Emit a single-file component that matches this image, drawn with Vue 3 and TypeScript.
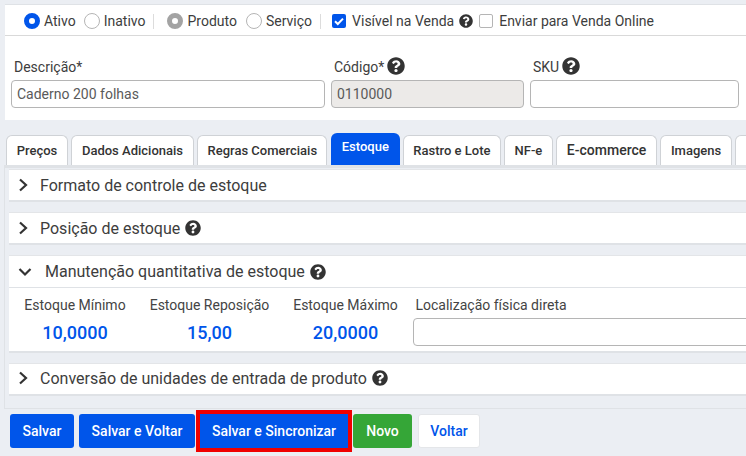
<script setup lang="ts">
const tabs = [
  { label: 'Preços', w: 61.4 },
  { label: 'Dados Adicionais', w: 122.4 },
  { label: 'Regras Comerciais', w: 130.1 },
  { label: 'Estoque', w: 68.7, active: true },
  { label: 'Rastro e Lote', w: 97.4 },
  { label: 'NF-e', w: 48.4 },
  { label: 'E-commerce', w: 100.7, big: true },
  { label: 'Imagens', w: 71.1 },
  { label: '', w: 40 },
]
const stocks = [
  { label: 'Estoque Mínimo', value: '10,0000', w: 125 },
  { label: 'Estoque Reposição', value: '15,00', w: 144 },
  { label: 'Estoque Máximo', value: '20,0000', w: 128 },
]
</script>

<template>
  <div class="page">
    <svg width="0" height="0" class="defs">
      <symbol id="q" viewBox="0 0 512 512">
        <path fill="currentColor" d="M504 256c0 137-111 248-248 248S8 393 8 256 119 8 256 8s248 111 248 248zM262.700 90c-54.500 0-89.300 23-116.500 63.800-3.500 5.300-2.400 12.400 2.700 16.300l34.700 26.300c5.200 3.900 12.600 3 16.700-2.100 17.900-22.700 30.100-35.800 57.300-35.800 20.400 0 45.700 13.100 45.700 32.900 0 15-12.400 22.700-32.500 34-23.500 13.200-54.600 29.600-54.600 70.600V300c0 6.600 5.400 12 12 12h56c6.600 0 12-5.400 12-12v-1.300c0-28.400 83-29.600 83-106.500 0-57.900-60.100-102.200-116.500-102.200zM256 338c-25.300 0-45.900 20.600-45.900 45.900 0 25.300 20.600 45.900 45.900 45.900s45.900-20.600 45.900-45.900c0-25.300-20.600-45.900-45.900-45.900z"/>
      </symbol>
    </svg>

    <section class="card">
      <div class="opts">
        <span class="radio on"></span><span class="opt a1">Ativo</span>
        <span class="radio"></span><span class="opt a2">Inativo</span>
        <span class="sep s1"></span>
        <span class="radio grey"></span><span class="opt a4">Produto</span>
        <span class="radio"></span><span class="opt a2">Serviço</span>
        <span class="sep s2"></span>
        <span class="check on">
          <svg viewBox="0 0 14 14" width="14" height="14"><path d="M3 7.200l2.800 2.800L11 4.600" fill="none" stroke="#fff" stroke-width="2"/></svg>
        </span>
        <span class="opt a3">Visível na Venda</span>
        <svg class="help h14" viewBox="0 0 512 512"><use href="#q" /></svg>
        <span class="check"></span>
        <span class="opt">Enviar para Venda Online</span>
      </div>
      <div class="fields">
        <div class="f f1">
          <label>Descrição*</label>
          <div class="inp">Caderno 200 folhas</div>
        </div>
        <div class="f f2">
          <label>Código* <svg class="help h17" viewBox="0 0 512 512"><use href="#q" /></svg></label>
          <div class="inp dis">0110000</div>
        </div>
        <div class="f f3">
          <label>SKU <svg class="help h17" viewBox="0 0 512 512"><use href="#q" /></svg></label>
          <div class="inp"></div>
        </div>
      </div>
    </section>

    <nav class="tabs">
      <span
        v-for="t in tabs"
        :key="t.label"
        class="tab"
        :class="{ active: t.active, big: t.big }"
        :style="{ width: t.w + 'px' }"
      >{{ t.label }}</span>
    </nav>

    <div class="panel">
      <div class="acc">
        <div class="acc-h">
          <svg class="chev" viewBox="0 0 12 14" width="12" height="14"><path d="M3 1.500l6 5.500-6 5.500" fill="none" stroke="#333" stroke-width="2.200"/></svg>
          <span>Formato de controle de estoque</span>
        </div>
      </div>
      <div class="acc">
        <div class="acc-h">
          <svg class="chev" viewBox="0 0 12 14" width="12" height="14"><path d="M3 1.500l6 5.500-6 5.500" fill="none" stroke="#333" stroke-width="2.200"/></svg>
          <span>Posição de estoque</span>
          <svg class="help h16" viewBox="0 0 512 512"><use href="#q" /></svg>
        </div>
      </div>
      <div class="acc open">
        <div class="acc-h opened">
          <svg class="chev down" viewBox="0 0 14 12" width="14" height="12"><path d="M1.500 3l5.500 5.500L12.500 3" fill="none" stroke="#333" stroke-width="2.200"/></svg>
          <span>Manutenção quantitativa de estoque</span>
          <svg class="help h16" viewBox="0 0 512 512"><use href="#q" /></svg>
        </div>
        <div class="acc-b">
          <div v-for="s in stocks" :key="s.label" class="stock" :style="{ width: s.w + 'px' }">
            <div class="st-l">{{ s.label }}</div>
            <div class="st-v">{{ s.value }}</div>
          </div>
          <div class="loc">
            <div class="st-l">Localização física direta</div>
            <div class="inp loc-i"></div>
          </div>
        </div>
      </div>
      <div class="acc last">
        <div class="acc-h">
          <svg class="chev" viewBox="0 0 12 14" width="12" height="14"><path d="M3 1.500l6 5.500-6 5.500" fill="none" stroke="#333" stroke-width="2.200"/></svg>
          <span>Conversão de unidades de entrada de produto</span>
          <svg class="help h16" viewBox="0 0 512 512"><use href="#q" /></svg>
        </div>
      </div>
    </div>

    <div class="actions">
      <button class="btn blue b1">Salvar</button>
      <button class="btn blue b2">Salvar e Voltar</button>
      <button class="btn blue b3">Salvar e Sincronizar</button>
      <button class="btn green b4">Novo</button>
      <button class="btn white b5">Voltar</button>
    </div>
  </div>
</template>

<style>
html, body { margin: 0; background: #ebeef3; overflow: hidden; }
</style>

<style scoped>
.page {
  width: 746px;
  height: 456px;
  overflow: hidden;
  background: #ebeef3;
  font-family: Roboto, "Liberation Sans", sans-serif;
  color: #3d3d3d;
  font-size: 14px;
  padding-top: 4px;
  box-sizing: border-box;
}
.defs { position: absolute; }
.card {
  margin-left: 5px;
  height: 116px;
  background: #fff;
  border-top: 1px solid #dfe2e6;
  box-sizing: border-box;
}
.opts {
  display: flex;
  align-items: center;
  height: 31px;
  padding: 2px 0 0 19px;
  border-bottom: 1px solid #d9d9d9;
  box-sizing: border-box;
  white-space: nowrap;
}
.radio {
  width: 16px;
  height: 16px;
  border-radius: 50%;
  border: 1px solid #b5b5b5;
  box-sizing: border-box;
  background: #fff;
  flex: none;
}
.radio.on { border: 5px solid #0055ea; }
.radio.grey { border: 5px solid #a3a3a3; }
.opt { margin-left: 4px; }
.a1 { margin-right: 8px; }
.a2 { margin-right: 8px; }
.a4 { margin-right: 9px; }
.sep { width: 1px; height: 15px; background: #dcdcdc; }
.s1 { margin-right: 13px; }
.s2 { margin-right: 11px; }
.check {
  width: 14px;
  height: 14px;
  border-radius: 2px;
  border: 1px solid #b5b5b5;
  box-sizing: border-box;
  flex: none;
  display: flex;
  align-items: center;
  justify-content: center;
  margin-right: 2px;
}
.check.on { background: #0055ea; border: none; }
.a3 { margin-right: 5px; }
.help { color: #333; flex: none; }
.h14 { width: 14px; height: 14px; margin-right: 6px; }
.h16 { width: 16px; height: 16px; margin-left: 5px; }
.h17 { width: 18px; height: 18px; vertical-align: -3px; margin-left: -1px; }
.fields { display: flex; padding: 20px 0 0 6px; }
.f label { display: block; height: 24px; line-height: 23px; padding-left: 3px; }
.f1 { width: 314px; margin-right: 6px; }
.f2 { width: 193px; margin-right: 6px; }
.f3 { width: 209px; }
.inp {
  height: 28px;
  border: 1px solid #b5b5b5;
  border-radius: 4px;
  box-sizing: border-box;
  background: #fff;
  line-height: 26px;
  padding: 0 5px;
  color: #5a5a5a;
}
.dis { background: #eceae8; }
.tabs { display: flex; gap: 3.6px; margin: 13px 0 0 6.3px; height: 32px; align-items: flex-end; }
.tab {
  height: 30px;
  flex: none;
  box-sizing: border-box;
  background: #fff;
  border: 1px solid #cfd2d6;
  border-bottom: none;
  border-radius: 6px 6px 0 0;
  text-align: center;
  line-height: 30px;
  font-size: 13px;
  font-weight: 500;
  color: #333;
  white-space: nowrap;
}
.tab.big { font-size: 14px; line-height: 28px; }
.tab.active {
  height: 32px;
  background: #0055ea;
  border: none;
  color: #fff;
  line-height: 28px;
}
.panel {
  margin-left: 4px;
  height: 244px;
  border-top: 3px solid #dfe2e6;
  border-left: 1px solid #dfe2e6;
  border-bottom: 1px solid #dfe2e6;
  box-sizing: border-box;
  padding: 1px 0 0 4px;
}
.acc {
  background: #fff;
  border-top: 1px solid #e3e5e8;
  border-bottom: 2px solid #dfe2e6;
  margin-bottom: 10px;
  box-sizing: border-box;
}
.acc-h {
  display: flex;
  align-items: center;
  height: 30px;
  padding-left: 8px;
  font-size: 16px;
}
.last .acc-h { height: 28px; padding-bottom: 2px; }
.chev { margin-right: 11px; flex: none; }
.chev.down { margin-left: 1px; }
.acc-h.opened { border-bottom: 1px solid #dfe2e6; height: 31px; }
.acc-h.opened .chev { margin-right: 13px; }
.acc-b { display: flex; height: 63px; box-sizing: border-box; padding: 7px 0 0 3.500px; }
.stock { text-align: center; flex: none; }
.st-l { height: 20px; line-height: 20px; color: #444; }
.st-v { font-size: 18px; font-weight: 500; color: #0055ea; line-height: 26px; margin-top: 5px; }
.loc { flex: 1; margin-left: 3px; min-width: 0; }
.loc .st-l { padding-left: 3px; }
.loc-i { margin-top: 3px; height: 28px; width: 340px; }
.actions { display: flex; padding: 5px 0 0 10px; align-items: flex-start; }
.btn {
  height: 34px;
  border: none;
  border-radius: 3px;
  font: 500 14px Roboto, "Liberation Sans", sans-serif;
  padding: 0;
  flex: none;
}
.blue { background: #0055ea; color: #fff; }
.green { background: #35a637; color: #fff; }
.white { background: #fff; color: #0055ea; border: 1px solid #e4e6e9; }
.b1 { width: 64px; margin-right: 5px; }
.b2 { width: 116px; margin-right: 5px; }
.b3 { width: 148px; margin-right: 5px; outline: 4px solid #f00000; border-radius: 0; }
.b4 { width: 59px; margin-right: 6px; }
.b5 { width: 62px; }
</style>
